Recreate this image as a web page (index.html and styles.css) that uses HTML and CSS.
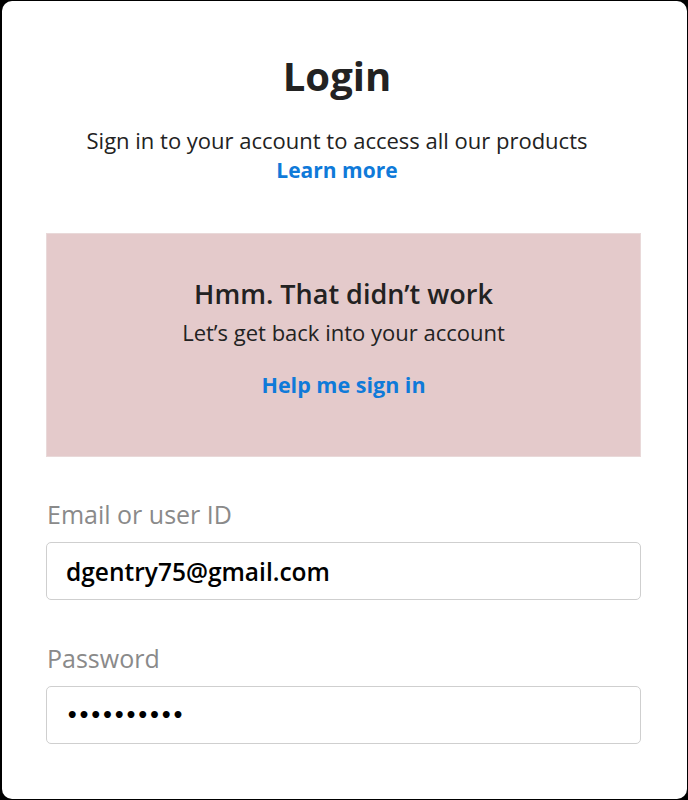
FILE: index.html
```html
<!DOCTYPE html>
<html lang="en">
<head>
    <meta charset="UTF-8">
    <meta name="viewport" content="width=device-width, initial-scale=1.0">
    <title>Login</title>
    <link rel="stylesheet" href="styles.css">
</head>
<body>
    <div class="login-card">
        <div class="header">
            <h1 class="title">Login</h1>
            <p class="subtitle">Sign in to your account to access all our products</p>
            <a class="link learn-more" href="#">Learn more</a>
        </div>

        <div class="error-box">
            <h2>Hmm. That didn’t work</h2>
            <p>Let’s get back into your account</p>
            <a class="link help" href="#">Help me sign in</a>
        </div>

        <div class="field">
            <label for="email">Email or user ID</label>
            <div class="input" id="email">dgentry75@gmail.com</div>
        </div>

        <div class="field">
            <label for="password">Password</label>
            <div class="input dots" id="password">••••••••••</div>
        </div>
    </div>
</body>
</html>
```

FILE: styles.css
```css
body {
    margin: 0;
    background: #000;
    font-family: "Open Sans", Lato, sans-serif;
    color: #222;
}

.login-card {
    margin: 1px 1px 1px 2px;
    height: 798px;
    box-sizing: border-box;
    background: #fff;
    border-radius: 10px;
    padding: 0 46px 0 44px;
    display: flex;
    flex-direction: column;
    align-items: center;
}

.header {
    display: flex;
    flex-direction: column;
    align-items: center;
    padding-right: 13px;
}

.title {
    margin: 51px 0 0;
    font-size: 40px;
    font-weight: 700;
    line-height: 48px;
}

.subtitle {
    margin: 26px 0 0;
    font-size: 22px;
    line-height: 28px;
}

.link {
    color: #0f7ad9;
    font-weight: 700;
    text-decoration: none;
    font-size: 21px;
    line-height: 28px;
}

.learn-more {
    margin-top: 2px;
}

.error-box {
    margin-top: 49px;
    width: 100%;
    height: 224px;
    box-sizing: border-box;
    background: #e4cacb;
    border: 1px solid #e9d9d9;
    display: flex;
    flex-direction: column;
    align-items: center;
    padding-top: 42px;
}

.error-box h2 {
    margin: 0;
    font-size: 27px;
    font-weight: 600;
    line-height: 36px;
}

.error-box p {
    margin: 6px 0 0;
    font-size: 22px;
    line-height: 28px;
}

.error-box .help {
    margin-top: 25px;
    font-size: 21.5px;
}

.field {
    width: 100%;
    margin-top: 41px;
}

.field + .field {
    margin-top: 42px;
}

.field label {
    display: block;
    color: #8a8a8a;
    font-size: 25px;
    line-height: 32px;
    margin-left: 1px;
}

.input {
    margin-top: 12px;
    height: 58px;
    box-sizing: border-box;
    border: 1px solid #cfcfcf;
    border-radius: 5px;
    padding: 0 19px;
    display: flex;
    align-items: center;
    font-size: 24.5px;
    font-weight: 600;
    color: #000;
}

.dots {
    font-family: "DejaVu Sans", sans-serif;
    font-size: 19.5px;
    font-weight: 700;
    letter-spacing: -0.7px;
}
```
